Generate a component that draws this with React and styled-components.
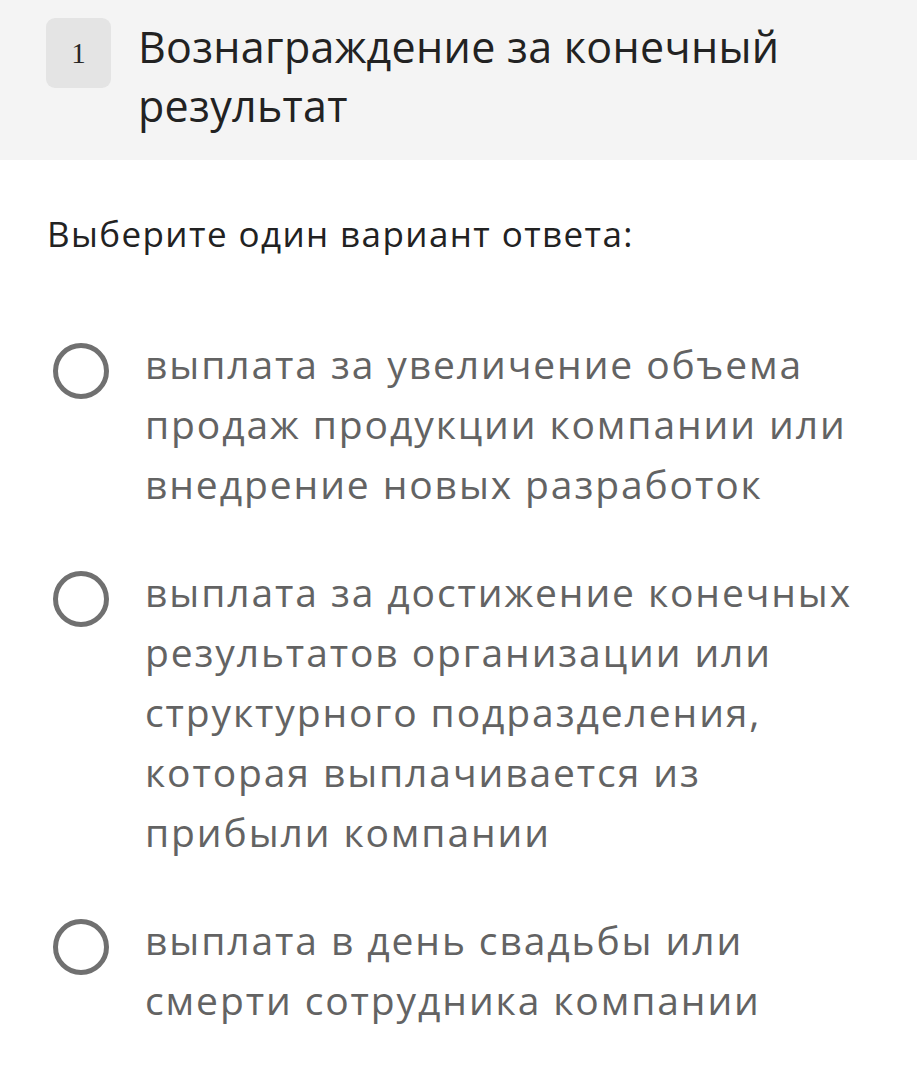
import React from "react";
import styled, { createGlobalStyle } from "styled-components";

const GlobalStyle = createGlobalStyle`
  html, body {
    margin: 0;
    padding: 0;
    background: #ffffff;
  }
  * {
    box-sizing: border-box;
  }
`;

const options = [
  "выплата за увеличение объема продаж продукции компании или внедрение новых разработок",
  "выплата за достижение конечных результатов организации или структурного подразделения, которая выплачивается из прибыли компании",
  "выплата в день свадьбы или смерти сотрудника компании",
];

const App = () => {
  return (
    <Page>
      <GlobalStyle />
      <Header>
        <Badge>1</Badge>
        <Title>Вознаграждение за конечный результат</Title>
      </Header>
      <Body>
        <Prompt>Выберите один вариант ответа:</Prompt>
        <OptionList>
          {options.map((text, i) => (
            <Option key={i}>
              <Radio />
              <OptionText>{text}</OptionText>
            </Option>
          ))}
        </OptionList>
      </Body>
    </Page>
  );
};

export default App;

const Page = styled.div`
  width: 917px;
  min-height: 1084px;
  background: #ffffff;
`;

const Header = styled.div`
  display: flex;
  align-items: flex-start;
  gap: 27px;
  background: #f4f4f4;
  padding: 18px 20px 0 46px;
  height: 160px;
`;

const Badge = styled.div`
  flex: 0 0 65px;
  height: 70px;
  border-radius: 9px;
  background: #e4e4e4;
  color: #262626;
  font-family: "Liberation Serif", serif;
  font-size: 29px;
  display: flex;
  align-items: center;
  justify-content: center;
`;

const Title = styled.div`
  font-family: "Open Sans", sans-serif;
  font-size: 43px;
  line-height: 59px;
  letter-spacing: 0.3px;
  color: #222222;
  margin-top: -1px;
  max-width: 720px;
`;

const Body = styled.div`
  padding: 50px 20px 0 47px;
`;

const Prompt = styled.div`
  font-family: "Open Sans", sans-serif;
  font-size: 35px;
  line-height: 48px;
  letter-spacing: 1.4px;
  color: #222222;
`;

const OptionList = styled.div`
  display: flex;
  flex-direction: column;
  gap: 48px;
  margin-top: 76px;
`;

const Option = styled.div`
  display: flex;
  align-items: flex-start;
  gap: 36px;
`;

const Radio = styled.div`
  flex: 0 0 56px;
  width: 56px;
  height: 56px;
  margin-top: 9px;
  margin-left: 6px;
  border: 5.5px solid #707070;
  border-radius: 50%;
`;

const OptionText = styled.div`
  font-family: "Open Sans", sans-serif;
  font-size: 39px;
  line-height: 60px;
  letter-spacing: 1.9px;
  color: #636363;
  max-width: 728px;
`;
